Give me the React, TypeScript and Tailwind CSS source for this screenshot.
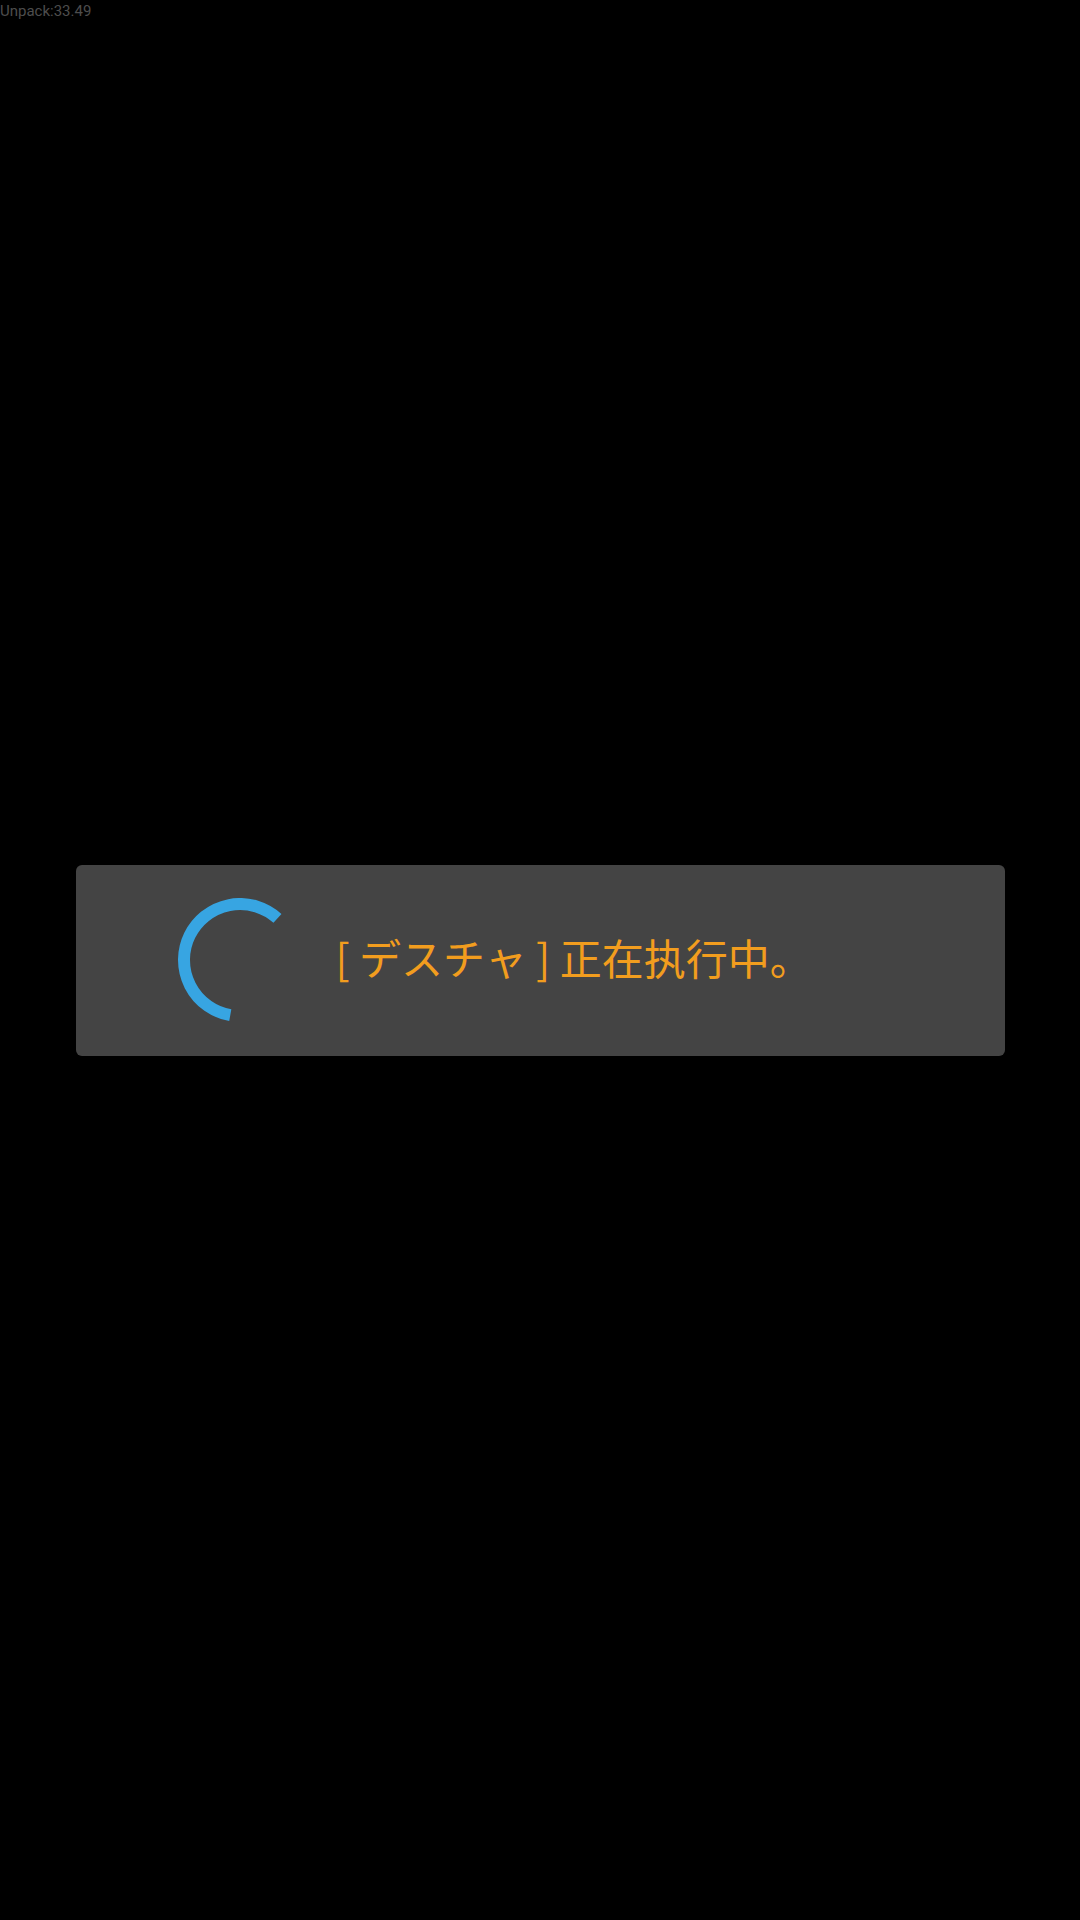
import React from "react";

function Spinner() {
  // arc from 100deg (bottom-left) clockwise to 312deg (top-right), r=56, stroke 12
  const cx = 62, cy = 62, r = 56;
  const a1 = (100 * Math.PI) / 180;
  const a2 = (312 * Math.PI) / 180;
  const x1 = cx + r * Math.cos(a1);
  const y1 = cy + r * Math.sin(a1);
  const x2 = cx + r * Math.cos(a2);
  const y2 = cy + r * Math.sin(a2);
  return (
    <svg width="124" height="124" viewBox="0 0 124 124" className="shrink-0">
      <path
        d={`M ${x1.toFixed(2)} ${y1.toFixed(2)} A ${r} ${r} 0 1 1 ${x2.toFixed(2)} ${y2.toFixed(2)}`}
        fill="none"
        stroke="#37a5e2"
        strokeWidth="12"
        strokeLinecap="butt"
      />
    </svg>
  );
}

export default function App() {
  return (
    <div className="relative flex h-[1920px] w-[1080px] items-center justify-center bg-black">
      <div className="absolute left-0 top-[1px] text-[15px] leading-[20px] text-[#4d4d4d] [font-family:Roboto,'Liberation_Sans',sans-serif]">
        Unpack:33.49
      </div>
      <div className="flex h-[191px] w-[929px] items-center rounded-[6px] bg-[#444444] pl-[102px]">
        <Spinner />
        <div className="mb-[7px] ml-[34px] whitespace-pre text-[42px] leading-none text-[#f29d1e] [font-family:'Noto_Sans_CJK_JP','Noto_Sans_CJK_SC',sans-serif]">
          [ デスチャ ] 正在执行中。
        </div>
      </div>
    </div>
  );
}
